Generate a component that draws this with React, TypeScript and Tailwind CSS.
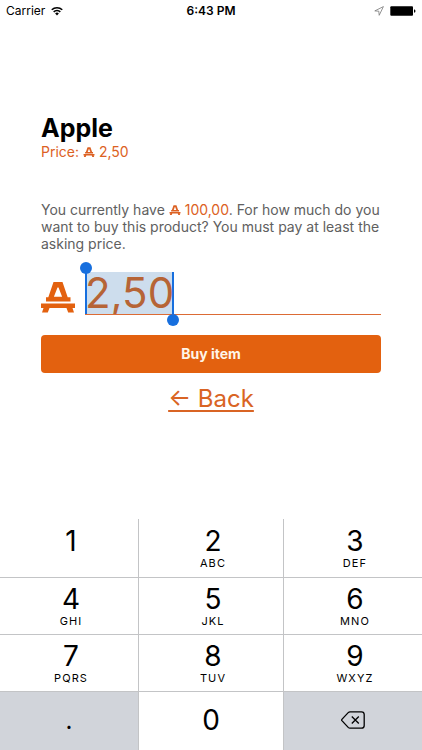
import React, { useState } from "react";

function Coin({ className }: { className: string }) {
  return (
    <svg viewBox="0 0 34 31" className={className} fill="currentColor" aria-hidden="true">
      <path
        fillRule="evenodd"
        d="M12.500.5h9l5.200 15.200h2.800v4.300H5v-4.300h2.300zM16.500 6l-3.600 9.200h8.200L17.500 6z"
      />
      <path d="M0 22h34v4.400h-2.500l1.500 4.600h-5.800l-1.700-4.600h-17L6.800 31H1l1.500-4.600H0z" />
    </svg>
  );
}

function StatusBar() {
  return (
    <header className="grid h-5 grid-cols-3 items-center px-1.5 pt-0.5 text-xs text-black">
      <div className="flex items-center gap-1.5">
        <span>Carrier</span>
        <svg viewBox="0 0 13 10" className="h-2.5 w-3" aria-hidden="true">
          <g fill="none" stroke="#000" strokeWidth="1.700">
            <path d="M.8 3.700a8.200 8.200 0 0 1 11.400 0" />
            <path d="M2.900 6a5.200 5.200 0 0 1 7.200 0" />
          </g>
          <path d="M4.500 7.600a2.900 2.900 0 0 1 4 0l-2 2.200z" />
        </svg>
      </div>
      <span className="text-center font-semibold">6:43 PM</span>
      <div className="flex items-center justify-end gap-1.5">
        <svg viewBox="0 0 10 10" className="size-2.5" fill="none" stroke="#777" strokeWidth=".8" aria-hidden="true">
          <path d="M9.400.6.800 4.900l4 .3.400 4.100z" />
        </svg>
        <svg viewBox="0 0 26 10" className="h-2.5 w-6.5" aria-hidden="true">
          <rect x=".3" y=".3" width="22.700" height="9.400" rx="1" fill="#000" />
          <path d="M24 3.200q1.500.4 1.500 1.800T24 6.800z" fill="#000" />
        </svg>
      </div>
    </header>
  );
}

const KEYS = [
  ["1", ""],
  ["2", "ABC"],
  ["3", "DEF"],
  ["4", "GHI"],
  ["5", "JKL"],
  ["6", "MNO"],
  ["7", "PQRS"],
  ["8", "TUV"],
  ["9", "WXYZ"],
];

function Keypad() {
  return (
    <div className="grid grid-cols-[24fr_25fr_24fr] grid-rows-[58px_56px_56px_58px] gap-px bg-[#c3c4c6] text-black">
      {KEYS.map(([digit, letters]) => (
        <button key={digit} type="button" className="flex flex-col items-center justify-center bg-white pb-0.5 pl-1">
          <span className="text-[28px] leading-8">{digit}</span>
          <span className="h-3 text-[11px] leading-3 tracking-widest">{letters}</span>
        </button>
      ))}
      <button type="button" className="flex items-center justify-center bg-[#d1d4da] text-2xl">
        .
      </button>
      <button type="button" className="flex items-center justify-center bg-white pb-0.5 text-[28px] leading-8">
        0
      </button>
      <button type="button" aria-label="Delete" className="flex items-center justify-center bg-[#d1d4da] pb-0.5">
        <svg viewBox="0 0 24 18" className="h-4.5 w-6" fill="none" stroke="#000" strokeWidth="1.300" aria-hidden="true">
          <path d="M9 .8h11.500q2.700 0 2.700 2.700v11q0 2.700-2.700 2.700H9q-1 0-1.800-.8L.9 9.600q-.5-.6 0-1.200l6.300-6.800Q8 .8 9 .8z" />
          <path d="m10.800 5.500 7 7m0-7-7 7" />
        </svg>
      </button>
    </div>
  );
}

export default function App() {
  const [amount, setAmount] = useState("2,50");
  return (
    <div className="flex min-h-screen flex-col bg-white font-['Inter',sans-serif]">
      <StatusBar />
      <main className="px-[41px] pt-23 pb-6">
        <h1 className="text-[25px] leading-8 font-bold text-black">Apple</h1>
        <p className="text-sm leading-4 text-[#dc6123]">
          Price: <Coin className="inline h-2.5 w-3 align-baseline" /> 2,50
        </p>
        <p className="mt-[41px] text-sm leading-[17px] text-[#606060]">
          You currently have{" "}
          <span className="whitespace-nowrap text-[#dc6123]">
            <Coin className="inline h-2.5 w-3 align-baseline" /> 100,00
          </span>
          . For how much do you want to buy this product? You must pay at least the asking price.
        </p>
        <form className="mt-5" onSubmit={(e) => e.preventDefault()}>
          <div className="flex items-end gap-2.5 text-[#e3610f]">
            <Coin className="mb-0.5 h-8 w-[34px]" />
            <div className="relative min-w-0 flex-1 border-b border-b-[#dc6b35]">
              <div className="absolute inset-y-0 left-0 w-[89px] border-x-2 border-[#176fde] bg-[#cddded]">
                <span className="absolute -top-2.5 -left-[7px] size-3 rounded-full bg-[#176fde]" />
                <span className="absolute -right-[7px] -bottom-3 size-3 rounded-full bg-[#176fde]" />
              </div>
              <input
                aria-label="Amount"
                inputMode="decimal"
                value={amount}
                onChange={(e) => setAmount(e.target.value)}
                className="relative block h-[42px] w-full bg-transparent pb-0.5 text-[42px] leading-10 text-[#b66436] outline-none"
              />
            </div>
          </div>
          <button
            type="submit"
            className="mt-5 block h-[38px] w-full rounded-sm bg-[#e3610f] text-sm font-bold text-[#fff5e8]"
          >
            Buy item
          </button>
        </form>
        <div className="mt-2.5 text-center">
          <a href="#back" className="text-2xl leading-8 text-[#d96424] underline decoration-2 underline-offset-3">
            ← Back
          </a>
        </div>
      </main>
      <div className="mt-auto">
        <Keypad />
      </div>
    </div>
  );
}
